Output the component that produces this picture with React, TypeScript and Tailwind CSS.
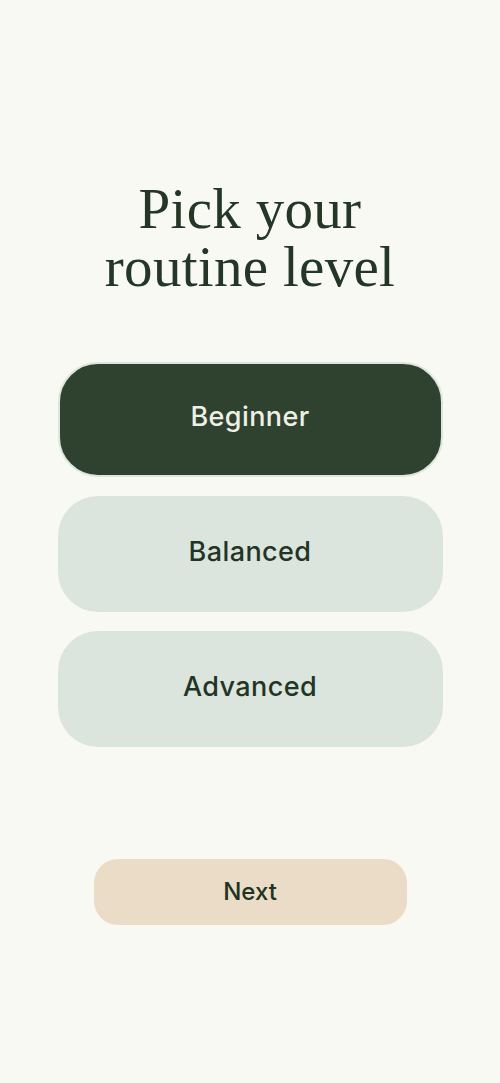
const levels = ["Beginner", "Balanced", "Advanced"];

export default function App() {
  const selected = "Beginner";

  return (
    <div className="min-h-[1083px] w-[500px] bg-[#f9f9f4] flex flex-col items-center">
      <h1 className="mt-[180px] text-center text-[57px] leading-[58px] tracking-[0.3px] text-[#243726] font-['Liberation_Serif',serif]">
        Pick your
        <br />
        routine level
      </h1>

      <div className="mt-[66px] w-[385px] flex flex-col gap-[19px]">
        {levels.map((level) => {
          const active = level === selected;
          return (
            <button
              key={level}
              className={
                active
                  ? "h-[115px] rounded-[40px] border-2 border-[#dce6dc] bg-[#2f4230] text-[#eef0e6] text-[27px] tracking-[0.4px] font-medium pb-[4px] font-['Inter',sans-serif]"
                  : "h-[116px] rounded-[40px] bg-[#dce5dd] text-[#223525] text-[27px] tracking-[0.4px] font-medium pb-[4px] font-['Inter',sans-serif]"
              }
            >
              {level}
            </button>
          );
        })}
      </div>

      <button className="mt-[112px] w-[313px] h-[66px] rounded-[24px] bg-[#ebdcc7] text-[#1f3322] text-[24px] font-medium font-['Inter',sans-serif]">
        Next
      </button>
    </div>
  );
}
